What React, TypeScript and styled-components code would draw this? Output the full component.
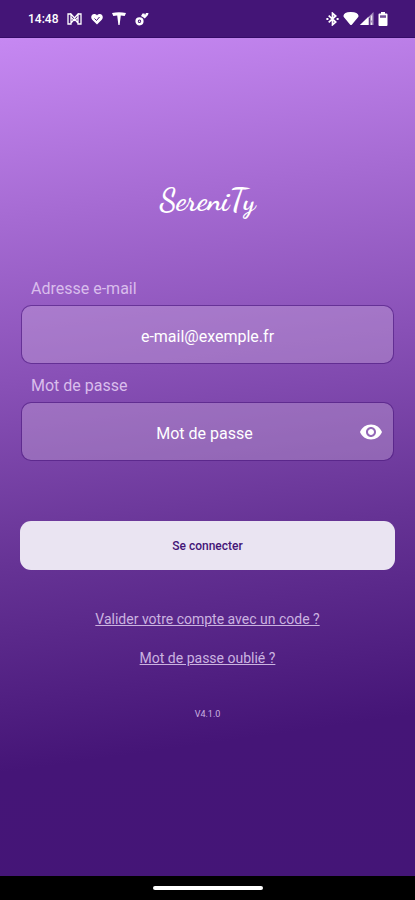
import React, { useState } from "react";
import styled, { createGlobalStyle } from "styled-components";

const GlobalStyle = createGlobalStyle`
  *, *::before, *::after { box-sizing: border-box; }
  body { margin: 0; background: #441577; font-family: Roboto, sans-serif; }
`;

const Screen = styled.div`
  min-height: 100vh;
  display: flex;
  flex-direction: column;
`;

const StatusBar = styled.header`
  height: 38px;
  padding: 0 27px 0 28px;
  display: flex;
  align-items: center;
  justify-content: space-between;
  background: #441577;
  border-bottom: 1px solid #350b68;
  color: #fff;
`;

const StatusGroup = styled.div<{ $gap: number }>`
  display: flex;
  align-items: center;
  gap: ${(p) => p.$gap}px;
  svg { display: block; }
`;

const Clock = styled.time`
  font-size: 12px;
  line-height: 16px;
  font-weight: 500;
`;

const Content = styled.main`
  flex: 1;
  display: flex;
  flex-direction: column;
  align-items: center;
  padding: 136px 20px 32px;
  background: linear-gradient(172deg, #c688f2 0%, #a66bd3 20%, #8850b6 39%, #663395 59%, #451577 82%, #441577 100%);
`;

const Brand = styled.h1`
  margin: 0 0 52px;
  color: #fff;
  font-family: "Dancing Script", cursive;
  font-size: 30px;
  line-height: 52px;
  font-weight: 700;
`;

const Form = styled.form`
  width: 100%;
  display: flex;
  flex-direction: column;
`;

const Field = styled.div`
  display: flex;
  flex-direction: column;
  margin: 0 1px 11px;
`;

const Label = styled.label`
  padding-left: 10px;
  margin-bottom: 5px;
  color: #d9bdec;
  font-size: 16px;
  line-height: 22px;
`;

const InputBox = styled.div`
  height: 59px;
  display: flex;
  align-items: center;
  border: 1px solid rgba(75, 25, 125, 0.6);
  border-radius: 10px;
  background: rgba(214, 190, 226, 0.32);
  background-clip: padding-box;
`;

const TextInput = styled.input`
  flex: 1;
  min-width: 0;
  height: 100%;
  padding: 4px 0 0;
  border: 0;
  outline: 0;
  background: none;
  color: #fff;
  font: 400 16px/22px Roboto, sans-serif;
  text-align: center;
  &::placeholder { color: #fff; opacity: 1; }
`;

const PasswordInput = styled(TextInput)`
  padding-left: 34px;
`;

const EyeButton = styled.button`
  width: 36px;
  height: 36px;
  margin-right: 4px;
  padding: 0;
  display: grid;
  place-items: center;
  border: 0;
  background: none;
  color: #fff;
  cursor: pointer;
`;

const SubmitButton = styled.button`
  height: 49px;
  margin-top: 49px;
  border: 0;
  border-radius: 11px;
  background: #eae4f2;
  color: #441577;
  font: 500 12px/16px Roboto, sans-serif;
  cursor: pointer;
`;

const Links = styled.nav`
  margin-top: 39px;
  display: flex;
  flex-direction: column;
  align-items: center;
  gap: 19px;
`;

const TextLink = styled.a`
  color: #cbb3e0;
  font-size: 14px;
  line-height: 20px;
  text-decoration: underline;
`;

const Version = styled.small`
  margin-top: 40px;
  color: #cbb3e0;
  font-size: 9px;
  line-height: 12px;
`;

const NavigationBar = styled.footer`
  height: 24px;
  display: flex;
  align-items: center;
  justify-content: center;
  background: #000;
`;

const HomeHandle = styled.div`
  width: 110px;
  height: 4px;
  border-radius: 2px;
  background: #fff;
`;

const MailIcon = () => (
  <svg width="15" height="12" viewBox="0 0 15 12" fill="none" stroke="#fff" strokeWidth="1.3" aria-hidden="true">
    <path d="M4 1H1v10h3V1l3.500 4L11 1v10h3V1h-3M4 10l3.500-4L11 10" />
    <path d="M4 4.500l3.500 3L11 4.500" />
  </svg>
);

const HeartIcon = () => (
  <svg width="12" height="12" viewBox="0 0 12 12" aria-hidden="true">
    <path d="M6 11.500 1.200 6.700C-.8 4.300.5 1 3.200 1 4.500 1 5.500 1.600 6 2.400 6.500 1.600 7.500 1 8.800 1c2.700 0 4 3.300 2 5.700Z" fill="#fff" />
    <path d="m3.500 5.500 2 2 3-3.500" fill="none" stroke="#441577" strokeWidth="1" />
  </svg>
);

const TeslaIcon = () => (
  <svg width="14" height="13" viewBox="0 0 14 13" fill="#fff" aria-hidden="true">
    <path d="M0 1Q7-.4 14 1L12.700 4 8.800 3.400 7.600 13H6.400L5.200 3.400 1.300 4Z" />
  </svg>
);

const KeyIcon = () => (
  <svg width="14" height="14" viewBox="0 0 14 14" aria-hidden="true">
    <circle cx="4.500" cy="9.300" r="2.900" fill="none" stroke="#fff" strokeWidth="2.400" />
    <circle cx="4.500" cy="9.300" r=".8" fill="#fff" />
    <path d="M6 4 7.500 1.500h2L10 3l1-2h2.500L13 3 9.800 6.500 8.500 5.500Z" fill="#fff" />
  </svg>
);

const BluetoothIcon = () => (
  <svg width="13" height="14" viewBox="0 0 13 14" fill="none" stroke="#fff" strokeWidth="1.700" aria-hidden="true">
    <path d="m2.700 3.700 7 6.300-3.200 2.800V1.200L9.700 4l-7 6.300" />
    <path d="M.4 7h2M10.600 7h2" strokeWidth="2" />
  </svg>
);

const WifiIcon = () => (
  <svg width="16" height="13" viewBox="0 0 16 13" fill="#fff" aria-hidden="true">
    <path d="M.4 4Q1-.1 8 0t7.600 4q-.2 1-1.200 2L9 12.400q-1 1-2 0L1.600 6Q.6 5 .4 4Z" />
  </svg>
);

const SignalIcon = () => (
  <svg width="14" height="13" viewBox="0 0 14 13" aria-hidden="true">
    <path d="M0 13 13.500 0v13Z" fill="#fff" fillOpacity=".5" />
    <path d="M0 13 8.500 4.800V13Z" fill="#fff" />
    <path d="M11.500 3.500v5M11.500 10.500V13" stroke="#fff" strokeOpacity=".8" strokeWidth="1.200" />
    <path d="M9.500 6v7" stroke="#441577" strokeWidth=".8" />
  </svg>
);

const BatteryIcon = () => (
  <svg width="10" height="14" viewBox="0 0 10 14" aria-hidden="true">
    <path d="M3 0h4v1.500h1.500q1 0 1 1V13q0 1-1 1h-7q-1 0-1-1V2.500q0-1 1-1H3Z" fill="#fff" />
    <path d="M2 3.300h6v2.500H2Z" fill="#441577" fillOpacity=".75" />
  </svg>
);

const EyeIcon = () => (
  <svg width="24" height="24" viewBox="0 0 24 24" fill="currentColor" aria-hidden="true">
    <path d="M12 4.500C7 4.500 2.730 7.610 1 12c1.730 4.390 6 7.500 11 7.500s9.270-3.110 11-7.500c-1.730-4.390-6-7.500-11-7.500zM12 17c-2.760 0-5-2.240-5-5s2.240-5 5-5 5 2.240 5 5-2.240 5-5 5zm0-8c-1.660 0-3 1.340-3 3s1.340 3 3 3 3-1.340 3-3-1.340-3-3-3z" />
  </svg>
);

export default function App() {
  const [visible, setVisible] = useState(false);
  return (
    <Screen>
      <GlobalStyle />
      <StatusBar>
        <StatusGroup $gap={9}>
          <Clock>14:48</Clock>
          <MailIcon />
          <HeartIcon />
          <TeslaIcon />
          <KeyIcon />
        </StatusGroup>
        <StatusGroup $gap={4}>
          <BluetoothIcon />
          <StatusGroup $gap={1}>
            <WifiIcon />
            <SignalIcon />
          </StatusGroup>
          <BatteryIcon />
        </StatusGroup>
      </StatusBar>
      <Content>
        <Brand>SereniTy</Brand>
        <Form onSubmit={(e) => e.preventDefault()}>
          <Field>
            <Label htmlFor="email">Adresse e-mail</Label>
            <InputBox>
              <TextInput id="email" type="email" placeholder="e-mail@exemple.fr" />
            </InputBox>
          </Field>
          <Field>
            <Label htmlFor="password">Mot de passe</Label>
            <InputBox>
              <PasswordInput id="password" type={visible ? "text" : "password"} placeholder="Mot de passe" />
              <EyeButton type="button" aria-label="Afficher le mot de passe" onClick={() => setVisible(!visible)}>
                <EyeIcon />
              </EyeButton>
            </InputBox>
          </Field>
          <SubmitButton type="submit">Se connecter</SubmitButton>
        </Form>
        <Links>
          <TextLink href="#code">Valider votre compte avec un code ?</TextLink>
          <TextLink href="#oubli">Mot de passe oublié ?</TextLink>
        </Links>
        <Version>V4.1.0</Version>
      </Content>
      <NavigationBar>
        <HomeHandle />
      </NavigationBar>
    </Screen>
  );
}
